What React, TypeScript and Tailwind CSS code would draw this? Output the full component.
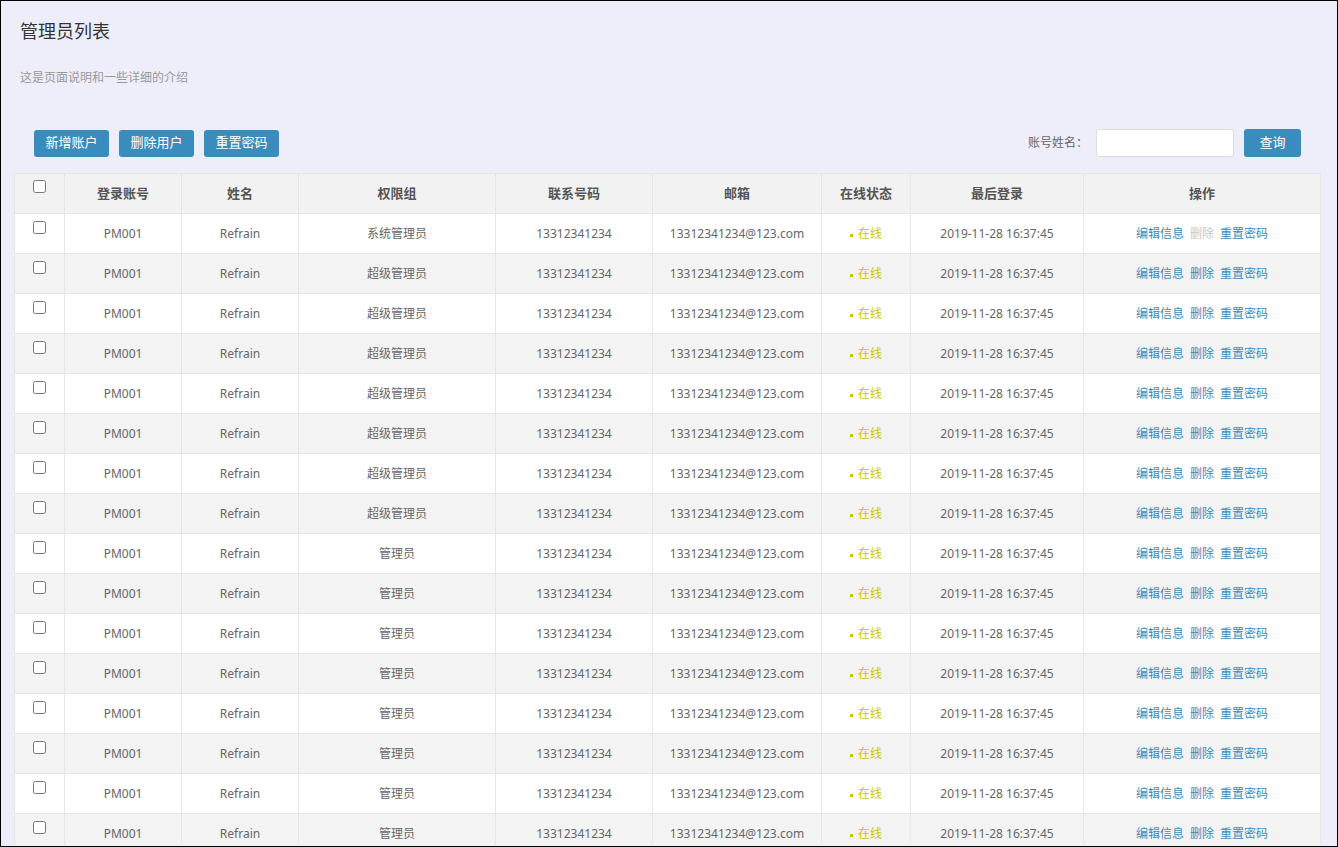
import React from "react";

const font = { fontFamily: '"Noto Sans", "Noto Sans CJK SC", sans-serif' };

const groups = [
  "系统管理员",
  "超级管理员",
  "超级管理员",
  "超级管理员",
  "超级管理员",
  "超级管理员",
  "超级管理员",
  "超级管理员",
  "管理员",
  "管理员",
  "管理员",
  "管理员",
  "管理员",
  "管理员",
  "管理员",
  "管理员",
];

const cols = [50, 117, 117, 197, 157, 169, 89, 173, 237];
const headers = ["登录账号", "姓名", "权限组", "联系号码", "邮箱", "在线状态", "最后登录", "操作"];

export default function App() {
  return (
    <div
      className="h-[847px] w-[1338px] overflow-hidden border border-black bg-[#eeeefa] text-[#666]"
      style={font}
    >
      <div className="pl-[19px] pt-[19px]">
        <h1 className="text-[18px] leading-[22px] text-[#333]">管理员列表</h1>
        <p className="mt-[28px] text-[12px] leading-[16px] text-[#999]">这是页面说明和一些详细的介绍</p>
      </div>
      <div className="pl-[13px] pr-[16px]">
        <div className="mt-[43px] flex items-center justify-between px-[20px]">
          <div className="flex gap-[10px]">
            {["新增账户", "删除用户", "重置密码"].map((t) => (
              <button
                key={t}
                className="h-[27px] w-[75px] rounded-[3px] bg-[#3a8cbd] text-[13px] text-white"
              >
                {t}
              </button>
            ))}
          </div>
          <div className="flex items-center">
            <span className="text-[12px] text-[#666]">账号姓名：</span>
            <input className="ml-[8px] h-[28px] w-[138px] rounded-[3px] border border-[#ddd] bg-white" />
            <button className="ml-[10px] h-[28px] w-[57px] rounded-[3px] bg-[#3a8cbd] text-[13px] text-white">
              查询
            </button>
          </div>
        </div>
        <table className="mt-[16px] w-[1307px] table-fixed border-collapse">
          <colgroup>
            {cols.map((w, i) => (
              <col key={i} style={{ width: w }} />
            ))}
          </colgroup>
          <thead>
            <tr className="bg-[#f2f2f2]">
              <th className="h-[40px] border border-[#e6e6e6] align-top pt-[1px] text-center">
                <input type="checkbox" className="h-[13px] w-[13px]" />
              </th>
              {headers.map((h) => (
                <th
                  key={h}
                  className="h-[40px] border border-[#e6e6e6] text-center text-[13px] font-bold text-[#555]"
                >
                  {h}
                </th>
              ))}
            </tr>
          </thead>
          <tbody>
            {groups.map((g, i) => (
              <tr key={i} className={i % 2 === 0 ? "bg-white" : "bg-[#f3f3f3]"}>
                <td className="h-[40px] border border-[#e6e6e6] align-top pt-[2px] text-center">
                  <input type="checkbox" className="h-[13px] w-[13px]" />
                </td>
                <td className="border border-[#e6e6e6] text-center text-[12px]">PM001</td>
                <td className="border border-[#e6e6e6] text-center text-[12px]">Refrain</td>
                <td className="border border-[#e6e6e6] text-center text-[12px]">{g}</td>
                <td className="border border-[#e6e6e6] text-center text-[12px]">13312341234</td>
                <td className="border border-[#e6e6e6] text-center text-[12px]">13312341234@123.com</td>
                <td className="border border-[#e6e6e6] text-center text-[12px] text-[#cdc500]">
                  <span className="inline-flex items-center">
                    <span className="mr-[5px] mt-[2px] inline-block h-[3px] w-[3px] bg-[#cdc500]" />
                    在线
                  </span>
                </td>
                <td className="border border-[#e6e6e6] text-center text-[12px]">2019-11-28 16:37:45</td>
                <td className="border border-[#e6e6e6] text-center text-[12px]">
                  <span className="inline-flex gap-[6px]">
                    <span className="text-[#3a8cbd]">编辑信息</span>
                    <span className={i === 0 ? "text-[#c8c8c8]" : "text-[#3a8cbd]"}>删除</span>
                    <span className="text-[#3a8cbd]">重置密码</span>
                  </span>
                </td>
              </tr>
            ))}
          </tbody>
        </table>
      </div>
    </div>
  );
}
